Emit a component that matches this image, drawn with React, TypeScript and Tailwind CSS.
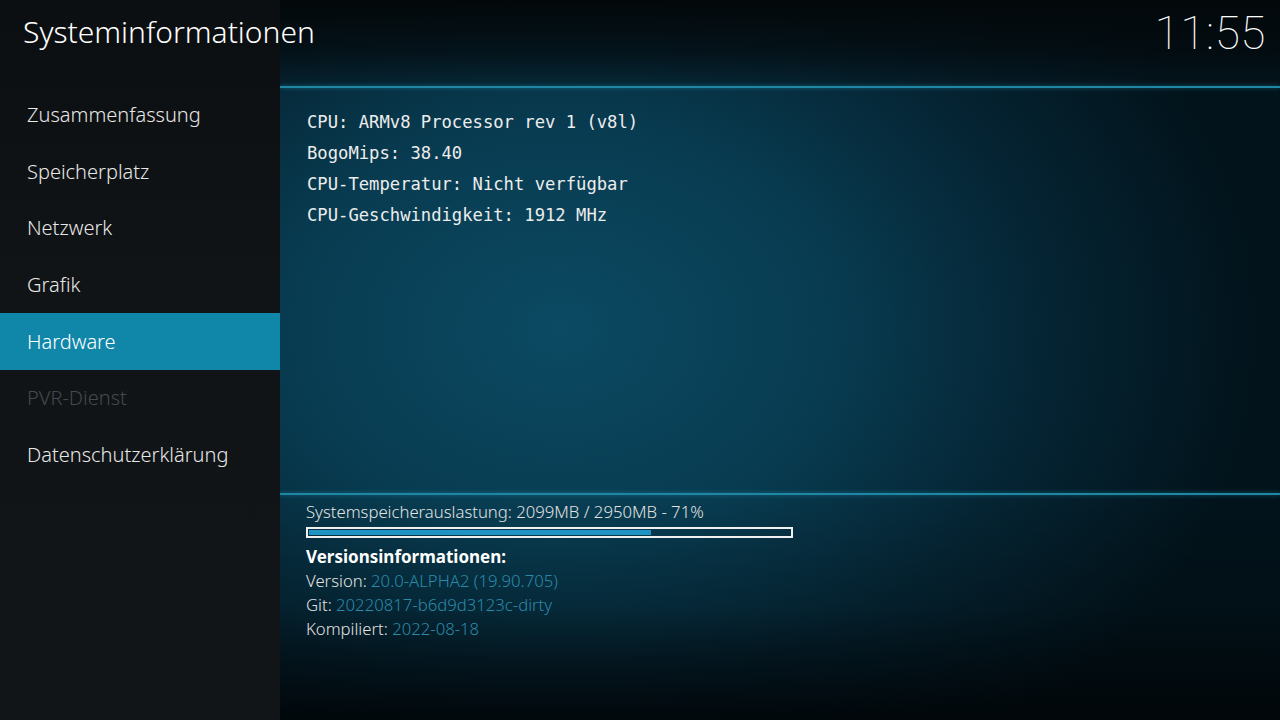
import React from 'react';

const menu = [
  { label: 'Zusammenfassung' },
  { label: 'Speicherplatz' },
  { label: 'Netzwerk' },
  { label: 'Grafik' },
  { label: 'Hardware', active: true },
  { label: 'PVR-Dienst', disabled: true },
  { label: 'Datenschutzerklärung' },
];

const cpuLines = [
  'CPU: ARMv8 Processor rev 1 (v8l)',
  'BogoMips: 38.40',
  'CPU-Temperatur: Nicht verfügbar',
  'CPU-Geschwindigkeit: 1912 MHz',
];

const versionInfo = [
  { label: 'Version:', value: '20.0-ALPHA2 (19.90.705)' },
  { label: 'Git:', value: '20220817-b6d9d3123c-dirty' },
  { label: 'Kompiliert:', value: '2022-08-18' },
];

const App = () => {
  const memPercent = 71;

  return (
    <div
      className="relative flex w-[1280px] h-[720px] overflow-hidden bg-[radial-gradient(ellipse_700px_520px_at_560px_330px,#0b4a63_0%,#083b50_40%,#052433_70%,#02131b_100%)] text-[#e6e6e6]"
      style={{ fontFamily: '"Noto Sans", "Open Sans", sans-serif' }}
    >
      {/* Sidebar */}
      <aside className="relative z-10 flex flex-col w-[280px] h-full shrink-0 bg-[linear-gradient(180deg,#0c0f11_0%,#111417_40%,#121518_100%)]">
        <div className="h-[87px] pl-[23px] pt-[11px]">
          <h1 className="text-[30px] leading-[42px] font-light text-white whitespace-nowrap">Systeminformationen</h1>
        </div>
        <nav className="flex flex-col">
          {menu.map((item) => (
            <div
              key={item.label}
              className={`h-[56.6px] flex items-center pl-[27px] text-[20px] font-light ${
                item.active ? 'bg-[#1087a9] text-white' : item.disabled ? 'text-[#45494d]' : 'text-[#e8e8e8]'
              }`}
            >
              {item.label}
            </div>
          ))}
        </nav>
      </aside>

      {/* Main */}
      <main className="relative flex flex-col flex-1 h-full">
        {/* Header */}
        <div className="h-[86px] flex justify-end items-start pr-[14px] pt-[4px] bg-[linear-gradient(180deg,#03080a_0%,rgba(3,10,14,0.75)_60%,rgba(5,20,28,0.4)_100%)]">
          <span
            className="text-[46px] leading-[58px] font-thin text-white tracking-[0.5px]"
            style={{ fontFamily: 'Roboto, "Noto Sans", sans-serif' }}
          >
            11:55
          </span>
        </div>
        <div className="h-[2px] bg-[#1f86a3] shadow-[0_0_4px_rgba(40,150,180,0.6)]" />

        {/* CPU info */}
        <div className="h-[405px] pl-[27px] pt-[19px]">
          {cpuLines.map((line) => (
            <div
              key={line}
              className="h-[31px] leading-[31px] text-[17.2px] text-[#ededed]"
              style={{ fontFamily: '"DejaVu Sans Mono", "Liberation Mono", monospace' }}
            >
              {line}
            </div>
          ))}
        </div>

        <div className="h-[2px] bg-[#1f86a3] shadow-[0_0_4px_rgba(40,150,180,0.6)]" />

        {/* Bottom info */}
        <div className="flex-1 pl-[26px] pt-[6px] bg-[linear-gradient(180deg,rgba(0,0,0,0)_0%,rgba(0,0,0,0.15)_50%,rgba(1,5,8,0.9)_100%)]">
          <div className="text-[16.7px] leading-[22px] font-light text-[#e2e2e2]">
            Systemspeicherauslastung: 2099MB / 2950MB - 71%
          </div>
          <div className="mt-[4px] w-[487px] h-[11px] border-2 border-[#f0f0f0] p-[1px]">
            <div className="h-full bg-[#1e93c4]" style={{ width: `${memPercent}%` }} />
          </div>
          <div className="mt-[7px] text-[17px] leading-[24px] font-bold text-white">Versionsinformationen:</div>
          {versionInfo.map((row) => (
            <div key={row.label} className="text-[16.7px] leading-[24px] font-light">
              <span className="text-[#e2e2e2]">{row.label}</span>{' '}
              <span className="text-[#2a8aa9]">{row.value}</span>
            </div>
          ))}
        </div>
      </main>
    </div>
  );
};

export default App;
